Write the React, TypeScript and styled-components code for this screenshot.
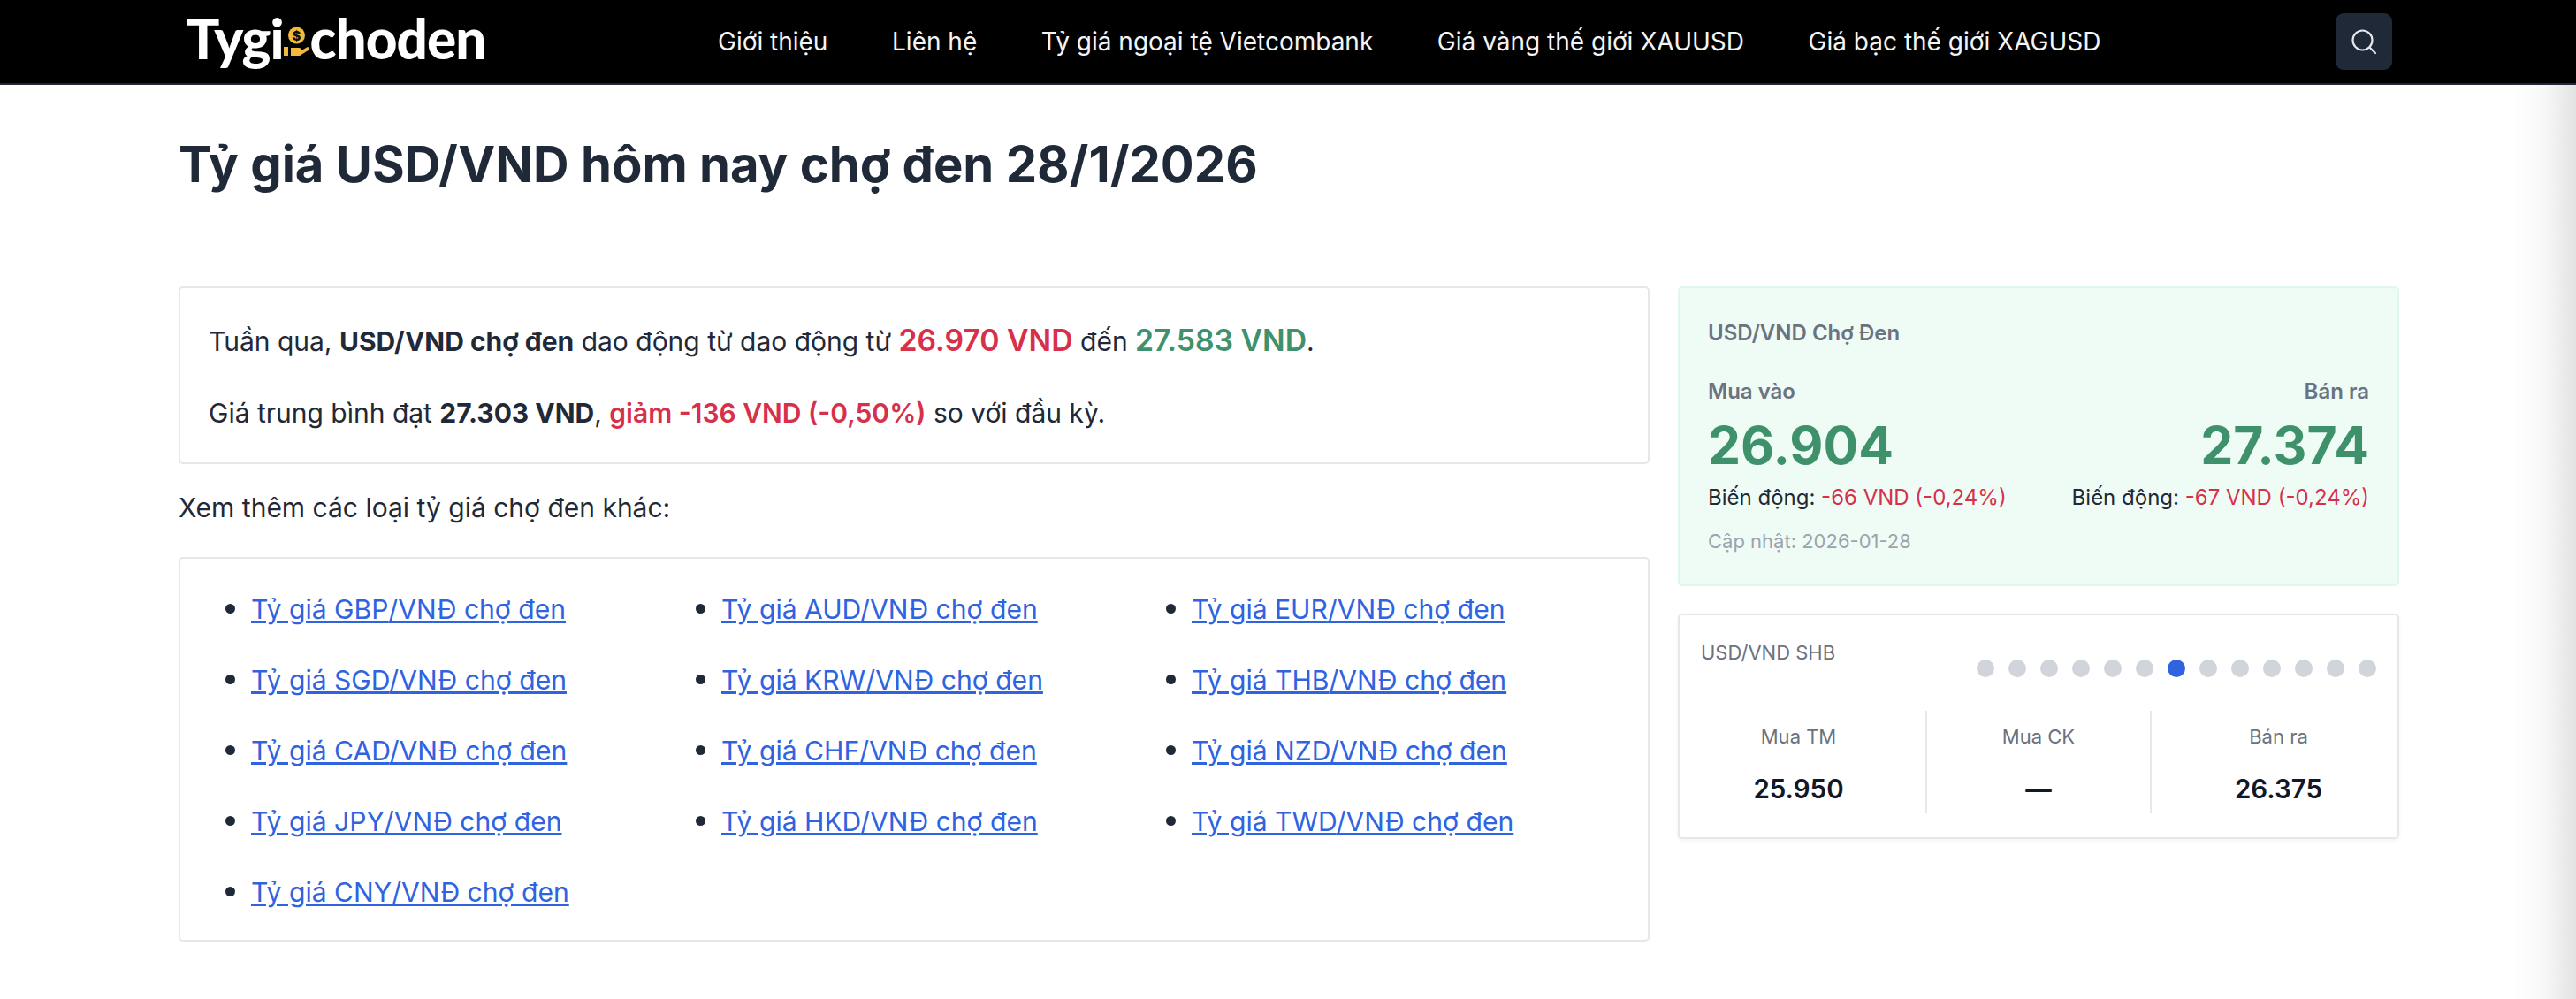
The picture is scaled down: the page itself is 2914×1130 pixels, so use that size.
import React from "react";
import styled, { createGlobalStyle } from "styled-components";

const Global = createGlobalStyle`
  html, body { margin: 0; padding: 0; background: #fff; height: 100%; overflow: hidden; }
  body { font-family: Inter, "Noto Sans", sans-serif; color: #1f2937; }
  * { box-sizing: border-box; }
`;

const Page = styled.div`
  position: relative;
  width: 2914px;
  height: 1130px;
  overflow: hidden;
`;

const Header = styled.header`
  height: 96px;
  background: #000;
  border-bottom: 2px solid #1f2937;
  display: flex;
  align-items: center;
  padding: 0 208px 0 211px;
`;

const Logo = styled.a`
  display: flex;
  align-items: center;
  width: 601px;
  height: 94px;
  padding-bottom: 8px;
  color: #fff;
  font-family: Lato, sans-serif;
  font-weight: 900;
  font-size: 62px;
  letter-spacing: -1px;
  line-height: 1;
`;

const LogoCoin = styled.svg`
  width: 30px;
  height: 50px;
  flex: none;
  margin-top: 2px;
`;

const Nav = styled.nav`
  display: flex;
  flex: 1;
  gap: 72.6px;
`;

const NavLink = styled.a`
  color: #f3f4f6;
  font-size: 28px;
  line-height: 38px;
  font-weight: 400;
  white-space: nowrap;
`;

const SearchButton = styled.button`
  width: 64px;
  height: 64px;
  border: 0;
  padding: 0;
  border-radius: 9px;
  background: #1f2937;
  display: flex;
  align-items: center;
  justify-content: center;
  margin-left: auto;
`;

const Main = styled.main`
  padding: 0 200px 0 202px;
`;

const Title = styled.h1`
  margin: 0;
  height: 228px;
  padding-top: 58px;
  font-size: 56.2px;
  line-height: 64px;
  font-weight: 700;
  color: #1f2937;
`;

const Columns = styled.div`
  display: grid;
  grid-template-columns: 1664px 816px;
  column-gap: 32px;
  align-items: start;
`;

const LeftCol = styled.div`
  display: flex;
  flex-direction: column;
`;

const RightCol = styled.aside`
  display: flex;
  flex-direction: column;
  gap: 31px;
`;

const Card = styled.section`
  border: 2px solid #e5e7eb;
  border-radius: 5px;
  background: #fff;
`;

const SummaryCard = styled(Card)`
  height: 201px;
  padding: 39px 32px 0;
  display: flex;
  flex-direction: column;
  gap: 41px;
`;

const SummaryLine = styled.p`
  margin: 0;
  font-size: 30px;
  line-height: 40px;
  white-space: nowrap;
`;

const Strong = styled.strong`
  font-weight: 700;
`;

const Tone = styled.span<{ $tone: "red" | "green"; $big?: boolean; $strong?: boolean }>`
  color: ${(p) => (p.$tone === "red" ? "#d7304a" : "#3f916c")};
  font-weight: ${(p) => (p.$strong ? 600 : 400)};
  font-size: ${(p) => (p.$big ? "33.75px" : "inherit")};
`;

const MoreLabel = styled.p`
  margin: 29px 0 36px;
  font-size: 30px;
  line-height: 40px;
`;

const LinksCard = styled(Card)`
  height: 435px;
  padding: 32px 32px;
`;

const LinkList = styled.ul`
  margin: 0;
  padding: 0;
  display: grid;
  grid-template-columns: repeat(3, 532px);
  grid-auto-rows: 80px;
  list-style: none;
`;

const LinkItem = styled.li`
  display: list-item;
  list-style: disc outside;
  margin-left: 48px;
  font-size: 30.1px;
  line-height: 48px;

  &::marker {
    font-size: 34px;
  }
`;

const RateLink = styled.a`
  color: #2f63e0;
  text-decoration: underline;
`;

const GreenCard = styled.section`
  height: 339px;
  padding: 33px 32px 0;
  border: 2px solid #dff8ea;
  border-radius: 5px;
  background: #effcf5;
`;

const GreenTitle = styled.h2`
  margin: 0 0 33px;
  font-size: 24px;
  line-height: 36px;
  font-weight: 600;
  color: #6b7280;
`;

const RateGrid = styled.div`
  display: flex;
  justify-content: space-between;
`;

const RateCol = styled.div<{ $end?: boolean }>`
  display: flex;
  flex-direction: column;
  align-items: ${(p) => (p.$end ? "flex-end" : "flex-start")};
`;

const RateLabel = styled.span`
  font-size: 24px;
  line-height: 30px;
  font-weight: 600;
  color: #6b7280;
`;

const RateValue = styled.strong`
  font-size: 58.8px;
  line-height: 72px;
  margin-top: 10px;
  font-weight: 700;
  color: #3f916c;
`;

const RateChange = styled.span`
  font-size: 24px;
  line-height: 36px;
  margin-top: 5px;
  color: #1f2937;
  white-space: nowrap;
`;

const Updated = styled.p`
  margin: 13px 0 0;
  font-size: 22px;
  line-height: 36px;
  color: #9ca3af;
`;

const BankCard = styled.section`
  height: 255px;
  border: 2px solid #e5e7eb;
  border-radius: 5px;
  background: #fff;
  box-shadow: 0 2px 4px rgba(0, 0, 0, 0.05);
  padding: 24px 24px 0;
`;

const BankTop = styled.div`
  display: flex;
  justify-content: space-between;
  height: 84px;
`;

const BankName = styled.span`
  font-size: 22px;
  line-height: 36px;
  color: #6b7280;
`;

const Dots = styled.div`
  display: flex;
  gap: 16px;
  margin-top: 26px;
`;

const Dot = styled.span<{ $active?: boolean }>`
  width: 20px;
  height: 20px;
  border-radius: 50%;
  background: ${(p) => (p.$active ? "#2f63e0" : "#d1d5db")};
`;

const Stats = styled.div`
  display: grid;
  grid-template-columns: 1fr 256px 1fr;
  margin: 0 -24px;
`;

const Stat = styled.div<{ $mid?: boolean; $shift?: "l" | "r" }>`
  height: 116px;
  display: flex;
  flex-direction: column;
  align-items: center;
  border-left: ${(p) => (p.$mid ? "2px solid #e5e7eb" : "0")};
  border-right: ${(p) => (p.$mid ? "2px solid #e5e7eb" : "0")};
  padding-right: ${(p) => (p.$shift === "l" ? "9px" : "0")};
  padding-left: ${(p) => (p.$shift === "r" ? "9px" : "0")};
  padding-top: 11px;
`;

const StatLabel = styled.span`
  font-size: 22px;
  line-height: 36px;
  color: #6b7280;
`;

const StatValue = styled.strong`
  font-size: 29.5px;
  line-height: 44px;
  margin-top: 19px;
  font-weight: 600;
  color: #111827;
`;

const EdgeShade = styled.div`
  position: absolute;
  top: 96px;
  right: 0;
  bottom: 0;
  width: 70px;
  background: linear-gradient(to right, rgba(225, 225, 225, 0), rgba(225, 225, 225, 0.25) 50%, #e2e2e2);
  pointer-events: none;
`;

const rows = [
  "GBP", "AUD", "EUR",
  "SGD", "KRW", "THB",
  "CAD", "CHF", "NZD",
  "JPY", "HKD", "TWD",
  "CNY",
];

export default function App() {
  return (
    <Page>
      <Global />
      <Header>
        <Logo>
          <span>Tygi</span>
          <LogoCoin viewBox="0 0 30 50">
            <circle cx="14.5" cy="21" r="9.5" fill="#f2b93b" />
            <text x="14.5" y="26.5" textAnchor="middle" fontSize="15" fontWeight="800" fontFamily="Inter" letterSpacing="0" fill="#111">$</text>
            <path d="M0 34h5v10H0z" fill="#f2b93b" />
            <path d="M8 35h9c2 0 3 1 3 3l7-4 2 1c0 2-1 3-3 4l-8 5H8z" fill="#f2b93b" />
          </LogoCoin>
          <span>choden</span>
        </Logo>
        <Nav>
          <NavLink>Giới thiệu</NavLink>
          <NavLink>Liên hệ</NavLink>
          <NavLink>Tỷ giá ngoại tệ Vietcombank</NavLink>
          <NavLink>Giá vàng thế giới XAUUSD</NavLink>
          <NavLink>Giá bạc thế giới XAGUSD</NavLink>
        </Nav>
        <SearchButton aria-label="Tìm kiếm">
          <svg width="30" height="30" viewBox="0 0 30 30" fill="none" stroke="#e5e7eb" strokeWidth="2.2">
            <circle cx="13.5" cy="13.5" r="11" />
            <path d="M21.5 21.5L28 28" strokeLinecap="round" />
          </svg>
        </SearchButton>
      </Header>
      <Main>
        <Title>Tỷ giá USD/VND hôm nay chợ đen 28/1/2026</Title>
        <Columns>
          <LeftCol>
            <SummaryCard>
              <SummaryLine>
                Tuần qua, <Strong>USD/VND chợ đen</Strong> dao động từ dao động từ{" "}
                <Tone $tone="red" $big $strong>26.970 VND</Tone> đến{" "}
                <Tone $tone="green" $big $strong>27.583 VND</Tone>.
              </SummaryLine>
              <SummaryLine>
                Giá trung bình đạt <Strong>27.303 VND</Strong>,{" "}
                <Tone $tone="red" $strong>giảm -136 VND (-0,50%)</Tone> so với đầu kỳ.
              </SummaryLine>
            </SummaryCard>
            <MoreLabel>Xem thêm các loại tỷ giá chợ đen khác:</MoreLabel>
            <LinksCard>
              <LinkList>
                {rows.map((code) => (
                  <LinkItem key={code}>
                    <RateLink>Tỷ giá {code}/VNĐ chợ đen</RateLink>
                  </LinkItem>
                ))}
              </LinkList>
            </LinksCard>
          </LeftCol>
          <RightCol>
            <GreenCard>
              <GreenTitle>USD/VND Chợ Đen</GreenTitle>
              <RateGrid>
                <RateCol>
                  <RateLabel>Mua vào</RateLabel>
                  <RateValue>26.904</RateValue>
                  <RateChange>Biến động: <Tone $tone="red">-66 VND (-0,24%)</Tone></RateChange>
                </RateCol>
                <RateCol $end>
                  <RateLabel>Bán ra</RateLabel>
                  <RateValue>27.374</RateValue>
                  <RateChange>Biến động: <Tone $tone="red">-67 VND (-0,24%)</Tone></RateChange>
                </RateCol>
              </RateGrid>
              <Updated>Cập nhật: 2026-01-28</Updated>
            </GreenCard>
            <BankCard>
              <BankTop>
                <BankName>USD/VND SHB</BankName>
                <Dots>
                  {Array.from({ length: 13 }, (_, i) => (
                    <Dot key={i} $active={i === 6} />
                  ))}
                </Dots>
              </BankTop>
              <Stats>
                <Stat $shift="l">
                  <StatLabel>Mua TM</StatLabel>
                  <StatValue>25.950</StatValue>
                </Stat>
                <Stat $mid>
                  <StatLabel>Mua CK</StatLabel>
                  <StatValue>—</StatValue>
                </Stat>
                <Stat $shift="r">
                  <StatLabel>Bán ra</StatLabel>
                  <StatValue>26.375</StatValue>
                </Stat>
              </Stats>
            </BankCard>
          </RightCol>
        </Columns>
      </Main>
      <EdgeShade />
    </Page>
  );
}
